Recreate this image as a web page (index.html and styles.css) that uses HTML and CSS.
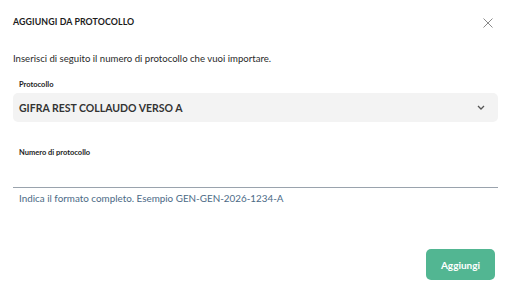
FILE: index.html
```html
<!DOCTYPE html>
<html lang="it">
<head>
    <meta charset="UTF-8">
    <meta name="viewport" content="width=device-width, initial-scale=1.0">
    <title>Aggiungi da protocollo</title>
    <link rel="stylesheet" href="styles.css">
</head>
<body>

<div class="modal">
    <div class="modal-header">
        <h2 class="modal-title">AGGIUNGI DA PROTOCOLLO</h2>
        <button class="close-btn" aria-label="Chiudi">
            <svg width="10" height="10" viewBox="0 0 10 10">
                <path d="M0.5 0.5 L9.5 9.5 M9.5 0.5 L0.5 9.5" stroke="#8a8a8a" stroke-width="1" fill="none"/>
            </svg>
        </button>
    </div>

    <p class="intro">Inserisci di seguito il numero di protocollo che vuoi importare.</p>

    <div class="field">
        <label class="field-label" for="protocollo">Protocollo</label>
        <div class="select-box" id="protocollo">
            <span>GIFRA REST COLLAUDO VERSO A</span>
            <svg width="8" height="5" viewBox="0 0 8 5">
                <path d="M1 1 L4 4 L7 1" stroke="#555" stroke-width="1.3" fill="none"/>
            </svg>
        </div>
    </div>

    <div class="field field-input">
        <label class="field-label" for="numero">Numero di protocollo</label>
        <input type="text" id="numero" class="line-input">
        <div class="hint">Indica il formato completo. Esempio GEN-GEN-2026-1234-A</div>
    </div>

    <div class="modal-footer">
        <button class="btn-primary">Aggiungi</button>
    </div>
</div>

</body>
</html>
```

FILE: styles.css
```css
body {
    margin: 0;
    background-color: white;
    font-family: Lato, "Noto Sans", sans-serif;
    color: #1f1f1f;
}
.modal {
    width: 513px;
    height: 288px;
    padding: 0 15px 0 13px;
    box-sizing: border-box;
    display: flex;
    flex-direction: column;
}
.modal-header {
    display: flex;
    justify-content: space-between;
    align-items: center;
    height: 20px;
    margin-top: 11px;
}
.modal-title {
    margin: 0;
    font-size: 8.8px;
    font-weight: 700;
    letter-spacing: 0.1px;
    color: #1c1c1c;
}
.close-btn {
    border: none;
    background: none;
    padding: 0;
    margin-right: 5px;
    margin-top: 3px;
    display: flex;
}
.intro {
    margin: 21px 0 0 0;
    font-size: 9.6px;
    line-height: 14px;
    color: #2a2a2a;
}
.field {
    margin-top: 14px;
}
.field-label {
    display: block;
    padding-left: 6px;
    font-size: 7.5px;
    font-weight: 700;
    color: #1c1c1c;
    line-height: 10px;
}
.select-box {
    margin-top: 3px;
    height: 29px;
    background-color: #f3f3f3;
    border-radius: 5px;
    display: flex;
    align-items: center;
    justify-content: space-between;
    padding: 0 13px 0 6px;
    font-size: 10.5px;
    font-weight: 700;
    color: #333;
}
.field-input {
    margin-top: 26px;
}
.line-input {
    display: block;
    width: 100%;
    height: 27px;
    margin-top: 3px;
    border: none;
    border-bottom: 1px solid #9aa3ad;
    background: none;
    outline: none;
    box-sizing: border-box;
}
.hint {
    padding-left: 6px;
    margin-top: 4px;
    font-size: 9.85px;
    line-height: 12px;
    color: #4b6a86;
}
.modal-footer {
    margin-top: auto;
    margin-bottom: 8px;
    display: flex;
    justify-content: flex-end;
}
.btn-primary {
    width: 69px;
    height: 31px;
    margin-right: 3px;
    border: none;
    border-radius: 5px;
    background-color: #52b692;
    color: white;
    font-family: Lato, "Noto Sans", sans-serif;
    font-size: 10px;
    font-weight: 700;
}
```
